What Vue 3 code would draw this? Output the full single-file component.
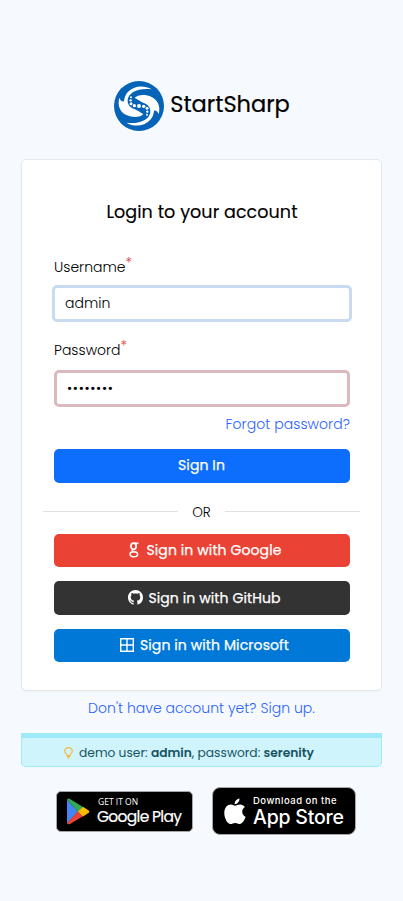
<script setup>
import { ref } from 'vue'

const username = ref('admin')
const password = ref('serenity')
const dots = [[51, 49, 3], [50, 58, 3.5], [51, 68, 4.5], [61, 74, 5], [75, 75, 6], [89, 76, 5], [99, 82, 4.5], [100, 92, 3.5], [99, 101, 3]]
</script>

<template>
  <main class="page">
    <header class="brand">
      <svg class="logo" viewBox="0 0 150 150">
        <circle cx="75" cy="75" r="75" fill="#0563b8" />
        <g fill="#fff">
          <path v-for="angle in [0, 180]" :key="angle" :transform="`rotate(${angle} 75 75)`" d="M113 25C89 11 59 14 41 34C34 42 31 50 30 61C24 62 18 58 16 50C9 75 20 94 37 102C57 111 80 109 88 99C80 96 72 88 61 84C49 80 40 71 41 57C43 34 75 19 113 25Z" />
          <circle v-for="(d, i) in dots" :key="i" :cx="d[0]" :cy="d[1]" :r="d[2]" />
        </g>
      </svg>
      <span class="name">StartSharp</span>
    </header>

    <form class="card" @submit.prevent>
      <h1>Login to your account</h1>
      <label class="label user-label">Username<sup>*</sup></label>
      <input v-model="username" class="input focused" type="text" />
      <label class="label pass-label">Password<sup>*</sup></label>
      <input v-model="password" class="input invalid" type="password" />
      <a class="forgot">Forgot password?</a>
      <button class="btn primary"><span>Sign In</span></button>
      <div class="divider"><span>OR</span></div>
      <button class="btn provider google">
        <svg width="10" height="16" viewBox="0 0 10 16" fill="none" stroke="#fff">
          <ellipse cx="4.5" cy="4.3" rx="2.6" ry="3.1" stroke-width="1.7" />
          <path d="M5 1.1H9.6M6.6 1.4L7.8 3M4 7.4C2.2 8.7 3.2 9.4 5.2 9.8" stroke-width="1.4" />
          <ellipse cx="4.8" cy="12.3" rx="3.8" ry="2.5" stroke-width="1.5" />
        </svg>
        <span>Sign in with Google</span>
      </button>
      <button class="btn provider github">
        <svg width="15" height="15" viewBox="0 0 16 16" fill="#fff">
          <path d="M8 0C3.58 0 0 3.58 0 8c0 3.54 2.29 6.53 5.47 7.59.4.07.55-.17.55-.38 0-.19-.01-.82-.01-1.49-2.01.37-2.53-.49-2.69-.94-.09-.23-.48-.94-.82-1.13-.28-.15-.68-.52-.01-.53.63-.01 1.08.58 1.23.82.72 1.21 1.87.87 2.33.66.07-.52.28-.87.51-1.07-1.78-.2-3.64-.89-3.64-3.95 0-.87.31-1.59.82-2.15-.08-.2-.36-1.02.08-2.12 0 0 .67-.21 2.2.82.64-.18 1.32-.27 2-.27s1.36.09 2 .27c1.53-1.04 2.2-.82 2.2-.82.44 1.1.16 1.92.08 2.12.51.56.82 1.27.82 2.15 0 3.07-1.87 3.75-3.65 3.95.29.25.54.73.54 1.48 0 1.07-.01 1.93-.01 2.2 0 .21.15.46.55.38A8.01 8.01 0 0 0 16 8c0-4.42-3.58-8-8-8z" />
        </svg>
        <span>Sign in with GitHub</span>
      </button>
      <button class="btn provider microsoft">
        <svg width="14" height="14" viewBox="0 0 14 14" fill="none" stroke="#fff" stroke-width="1.4">
          <path d="M.7.7H13.3V13.3H.7ZM7 .7V13.3M.7 7H13.3" />
        </svg>
        <span>Sign in with Microsoft</span>
      </button>
    </form>

    <a class="signup">Don't have account yet? Sign up.</a>

    <div class="alert">
      <svg width="9" height="12" viewBox="0 0 9 12" fill="none" stroke="#f8b83c" stroke-width="1.2">
        <path d="M3 8.5C3 7 .7 6.2.7 4.2A3.8 3.6 0 0 1 8.3 4.2C8.3 6.2 6 7 6 8.5Z" />
        <path d="M3 9.7H6M3.4 11H5.6" />
      </svg>
      <span>demo user: <b>admin</b>, password: <b>serenity</b></span>
    </div>

    <footer class="stores">
      <a class="store play">
        <svg width="24" height="27" viewBox="0 0 24 27">
          <path d="M1 1.5V25.5L12 13.5Z" fill="#4285f4" />
          <path d="M1 1.5Q2 0 4 1L17 9L12 13.7Z" fill="#34a853" />
          <path d="M1 25Q2 27 4 26L17 18.3L12 13.3Z" fill="#ea4335" />
          <path d="M17 8.8L22.8 12.4Q24 13.6 22.8 14.7L17 18.4L11.9 13.5Z" fill="#fbbc04" />
        </svg>
        <span class="words"><small>GET IT ON</small><strong>Google Play</strong></span>
      </a>
      <a class="store apple">
        <svg width="22" height="27" viewBox="0 0 22 27" fill="#fff">
          <path d="M15.5.5C15.7 3.5 13.2 6.2 10.6 6.2C10.3 3.4 12.8.9 15.5.5Z" />
          <path d="M11 7.7C12.4 7.7 13.8 6.5 16 6.5C18 6.5 19.8 7.4 20.9 9C17 11.5 17.5 17 21.6 18.7C20.5 22 18.3 26 15.7 26C14 26 13.3 24.9 11.2 24.9C9 24.9 8.2 26 6.6 26C3.4 26 .3 20 .3 15.2C.3 9.7 3.5 6.6 6.7 6.6C8.6 6.6 9.8 7.7 11 7.7Z" />
        </svg>
        <span class="words"><small>Download on the</small><strong>App Store</strong></span>
      </a>
    </footer>
  </main>
</template>

<style>
body { background: #f6fafe; }
</style>

<style scoped>
* { box-sizing: border-box; }
.page {
  min-height: 901px;
  padding: 81px 21px 0;
  font-family: Poppins, Inter, "Liberation Sans", sans-serif;
  font-size: 14px;
  color: #000;
  display: flex;
  flex-direction: column;
}
.brand { display: flex; align-items: center; justify-content: center; gap: 6px; height: 50px; padding-left: 1px; }
.logo { width: 50px; height: 50px; }
.name { font-size: 22.5px; font-weight: 400; line-height: 30px; margin-top: -4px; white-space: nowrap; -webkit-text-stroke: .2px; }
.card {
  margin-top: 28px;
  height: 532px;
  border: 1px solid #e4e8ed;
  border-radius: 5px;
  background: #fff;
  padding: 0 31px 0 32px;
  display: flex;
  flex-direction: column;
  box-shadow: 0 1px 2px rgba(30, 41, 59, .03);
}
h1 { margin: 40px 0 0; font-size: 17.5px; line-height: 24px; font-weight: 400; letter-spacing: .08px; text-align: center; white-space: nowrap; -webkit-text-stroke: .15px; }
.label { font-size: 14px; line-height: 20px; height: 20px; font-weight: 300; }
.label sup { color: #dc3545; font-size: 14px; line-height: 0; vertical-align: 4px; }
.user-label { margin-top: 33px; }
.pass-label { margin-top: 18px; }
.input {
  font: 300 14px/20px Poppins, Inter, sans-serif;
  color: #000;
  height: 37px;
  border: 3px solid;
  border-radius: 5px;
  padding: 0 10px;
  outline: none;
  background: #fff;
}
.focused { border-color: #c8dbf0; margin: 8px -2px 0; }
.invalid { border-color: #dcb9bf; margin-top: 10px; letter-spacing: .7px; }
.forgot { align-self: flex-end; margin-top: 7px; line-height: 20px; color: #2b62ff; font-weight: 300; letter-spacing: .06px; white-space: nowrap; }
.btn {
  border: 0;
  border-radius: 5px;
  color: #fff;
  font: 400 14px/20px Poppins, Inter, sans-serif;
  letter-spacing: .1px;
  -webkit-text-stroke: .25px;
  display: flex;
  align-items: center;
  justify-content: center;
  gap: 6px;
  flex: none;
  height: 34px;
  padding: 0 1px 2px 0;
  white-space: nowrap;
}
.provider { padding: 0 0 1px 6px; }
.primary { background: #0d6efd; margin-top: 15px; }
.divider { display: flex; align-items: center; gap: 14px; margin: 20px -10px 0 -11px; height: 20px; font-size: 13.5px; font-weight: 300; }
.divider::before, .divider::after { content: ""; flex: 1; height: 1px; background: #dfe2e1; margin-top: -3px; }
.google { background: #ea4335; height: 33px; margin-top: 11px; gap: 8px; }
.github { background: #333; margin-top: 14px; gap: 5px; padding-left: 5px; }
.microsoft { background: #0078d7; height: 33px; margin-top: 14px; padding-left: 5px; }
.signup { margin-top: 7px; line-height: 20px; text-align: center; color: #2b62ff; font-weight: 300; letter-spacing: .03px; white-space: nowrap; }
.alert {
  margin-top: 15px;
  height: 34px;
  background: #cff4fc;
  border: 1px solid #9eeaf9;
  border-top-width: 5px;
  border-radius: 0 0 5px 5px;
  color: #17535f;
  font-size: 12.25px;
  display: flex;
  align-items: center;
  gap: 6px;
  padding: 1px 0 0 42px;
  white-space: nowrap;
}
.alert b { font-weight: 600; }
.stores { display: flex; align-items: center; gap: 19px; margin: 20px 0 0 35px; }
.store { display: flex; align-items: center; background: #000; color: #fff; border: 1px solid #a6a6a6; flex: none; }
.play { width: 137px; height: 41px; border-radius: 5px; padding-left: 9px; gap: 7px; }
.apple { width: 144px; height: 48px; border-radius: 8px; padding-left: 11px; gap: 7px; }
.words { display: flex; flex-direction: column; white-space: nowrap; }
.play small { font: 400 8.5px/12px "Open Sans", sans-serif; margin: -2px 0 0 1px; }
.play strong { font: 400 15.5px/17px Poppins, sans-serif; letter-spacing: -.7px; -webkit-text-stroke: .2px; }
.apple small { font: 500 9.5px/12px Inter, sans-serif; letter-spacing: .5px; }
.apple strong { font: 500 19.5px/20px Inter, sans-serif; letter-spacing: -.2px; }
</style>
